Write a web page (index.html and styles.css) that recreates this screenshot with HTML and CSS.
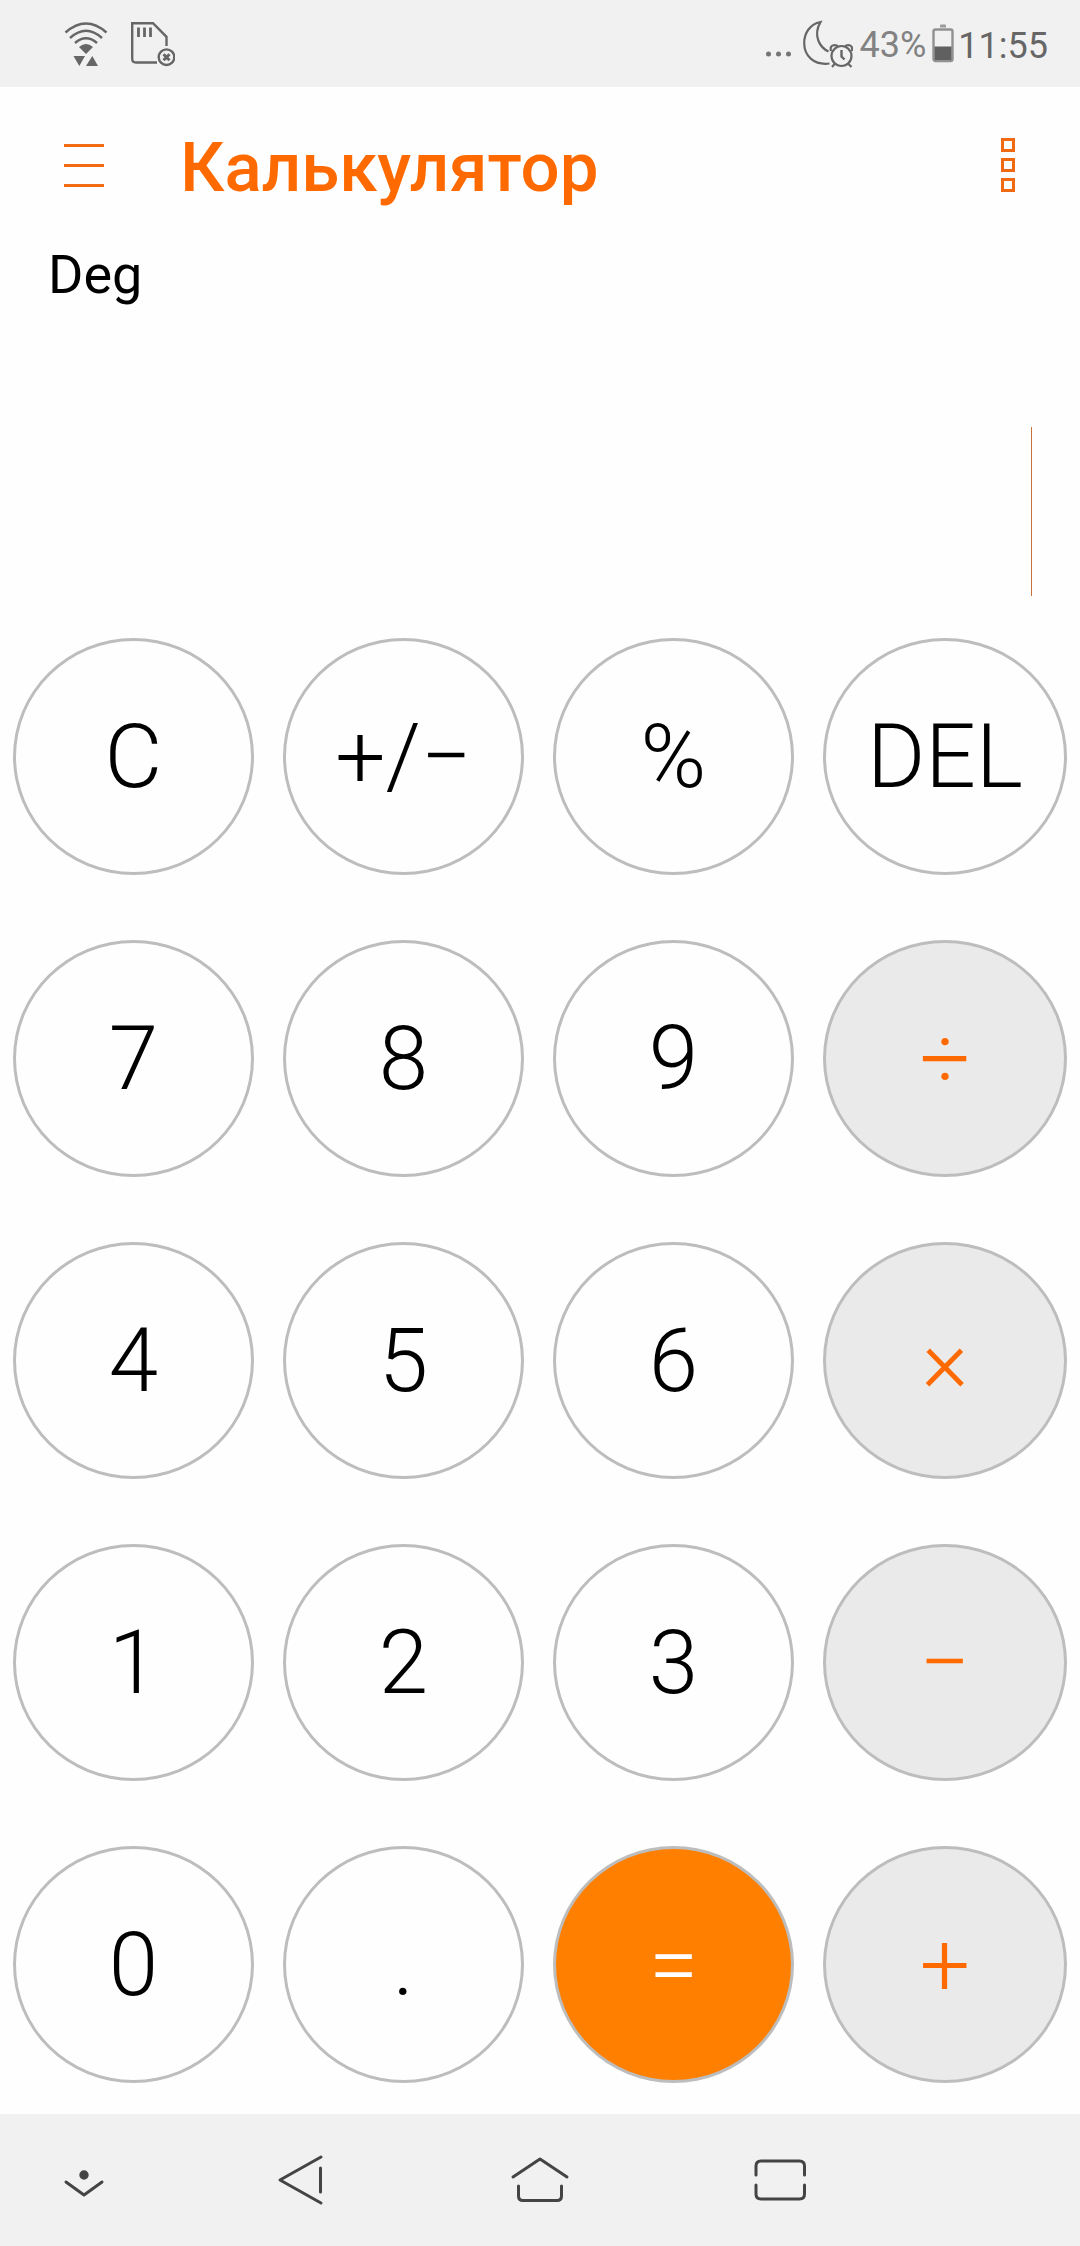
FILE: index.html
```html
<!DOCTYPE html>
<html lang="ru">
<head>
<meta charset="utf-8">
<meta name="viewport" content="width=device-width, initial-scale=1">
<title>Калькулятор</title>
<link rel="stylesheet" href="styles.css">
</head>
<body>
<div class="status">
  <svg class="status-wifi" width="44" height="46" viewBox="0 0 44 46" fill="none" stroke="#666" stroke-width="2.4" aria-hidden="true">
    <path d="M1.500 11.500Q22-6.500 42.500 11.500M6 17Q22 2.500 38 17M11 22Q22 12.500 33 22" />
    <path d="M15 26Q22 20 29 26L22 33ZM9.500 35H21L15.300 45ZM22 45H34L28.300 35Z" fill="#666" stroke="none"/>
  </svg>
  <svg class="status-sd" width="44" height="46" viewBox="0 0 44 46" fill="none" stroke="#666" stroke-width="2.400" aria-hidden="true">
    <path d="M26 41.500H5Q1.200 41.500 1.200 37.500V2.200H22L35.500 15.800V25"/>
    <path d="M7.500 6.500V16M13.500 6.500V16M19.500 6.500V16" stroke-width="2.800"/>
    <circle cx="35.500" cy="36.200" r="7.800"/>
    <path d="M32.500 33.200L38.500 39.200M38.500 33.200L32.500 39.200" stroke-width="3"/>
  </svg>
  <span class="status-space"></span>
  <svg width="25" height="44" viewBox="0 0 25 44" fill="#757575" aria-hidden="true">
    <circle cx="2.500" cy="32" r="2.500"/><circle cx="12.500" cy="32" r="2.500"/><circle cx="22.500" cy="32" r="2.500"/>
  </svg>
  <svg class="status-moon" width="50" height="48" viewBox="0 0 50 48" fill="none" stroke="#666" stroke-width="2.200" aria-hidden="true">
    <path d="M25.500 31.500C17 27.500 9.500 16 17.500 2C7 4 1.200 13 1.200 23C1.200 36 11 45.500 26.500 43.500" />
    <circle cx="38.500" cy="36" r="10"/>
    <path d="M38.500 30V36.500L41.500 39.500" stroke-width="2.400"/>
    <path d="M28 31Q26.500 25.500 31.500 25Q34 25 35 26.500M49 31Q50 25.500 45.500 25Q43 25 42 26.500M31.500 44L29 47M45.500 44L48.500 47"/>
  </svg>
  <span class="status-level">43%</span>
  <svg class="status-battery" width="22" height="40" viewBox="0 0 22 40" aria-hidden="true">
    <path d="M8 3.500V1.500Q8 .5 9 .5H13Q14 .5 14 1.500V3.500Z" fill="#9a9a9a"/>
    <rect x="1.500" y="5.500" width="19" height="31.500" rx="2" fill="none" stroke="#919191" stroke-width="2.400"/>
    <path d="M2.500 22.500H19.500V36H2.500Z" fill="#606060"/>
  </svg>
  <span class="status-time">11:55</span>
</div>
<header class="bar">
  <button class="menu" type="button" aria-label="Меню"><span></span><span></span><span></span></button>
  <h1 class="title">Калькулятор</h1>
  <button class="more" type="button" aria-label="Ещё"><span></span><span></span><span></span></button>
</header>
<main class="calc">
  <div class="mode">Deg</div>
  <div class="display">
    <input class="entry" type="text" aria-label="Выражение" readonly>
    <span class="caret"></span>
  </div>
  <div class="keys">
    <button class="key" type="button">C</button>
    <button class="key" type="button">+/−</button>
    <button class="key" type="button">%</button>
    <button class="key" type="button">DEL</button>
    <button class="key" type="button">7</button>
    <button class="key" type="button">8</button>
    <button class="key" type="button">9</button>
    <button class="key key-op" type="button">÷</button>
    <button class="key" type="button">4</button>
    <button class="key" type="button">5</button>
    <button class="key" type="button">6</button>
    <button class="key key-op" type="button">×</button>
    <button class="key" type="button">1</button>
    <button class="key" type="button">2</button>
    <button class="key" type="button">3</button>
    <button class="key key-op" type="button">−</button>
    <button class="key" type="button">0</button>
    <button class="key" type="button">.</button>
    <button class="key key-equals" type="button">=</button>
    <button class="key key-op" type="button">+</button>
  </div>
</main>
<nav class="nav">
  <button class="nav-button nav-hide" type="button" aria-label="Скрыть панель">
    <svg width="60" height="60" viewBox="0 0 60 60"><circle cx="30" cy="25" r="3.200" fill="#444"/><path d="M12 32L30 45L48 32"/></svg>
  </button>
  <button class="nav-button" type="button" aria-label="Назад">
    <svg width="60" height="60" viewBox="0 0 60 60"><path d="M51 7L10 30L51 53M50.500 18V42"/></svg>
  </button>
  <button class="nav-button" type="button" aria-label="Домой">
    <svg width="60" height="60" viewBox="0 0 60 60"><path d="M3 27L30 9L57 27M8.500 36V46Q8.500 50.500 13 50.500H47Q51.500 50.500 51.500 46V36"/></svg>
  </button>
  <button class="nav-button" type="button" aria-label="Недавние">
    <svg width="60" height="60" viewBox="0 0 60 60"><path d="M6 25V16Q6 11 11 11H49.500Q54.500 11 54.500 16V25M6 35V44Q6 49 11 49H49.500Q54.500 49 54.500 44V35"/></svg>
  </button>
</nav>
</body>
</html>
```

FILE: styles.css
```css
* {
  box-sizing: border-box;
}

body {
  margin: 0;
  min-height: 100vh;
  display: flex;
  flex-direction: column;
  background: #fefefe;
  color: #000;
  font-family: Roboto, "Liberation Sans", sans-serif;
}

button {
  margin: 0;
  padding: 0;
  border: 0;
  background: none;
  color: inherit;
  font: inherit;
}

svg {
  display: block;
  flex: none;
}

.status {
  height: 87px;
  padding: 0 32px 0 64px;
  display: flex;
  align-items: center;
  background: #f1f1f1;
  color: #666;
  font-size: 36px;
  line-height: 44px;
}

.status-sd {
  margin-left: 23px;
}

.status-space {
  flex: 1;
}

.status-moon {
  margin-left: 12px;
}

.status-level {
  margin-left: 7px;
  padding-top: 2px;
  color: #828282;
}

.status-battery {
  margin: 0 4px 0 6px;
}

.status-time {
  padding-top: 4px;
}

.bar {
  height: 156px;
  padding: 0 65px 0 64px;
  display: flex;
  align-items: center;
}

.menu {
  width: 40px;
  display: flex;
  flex-direction: column;
  gap: 17px;
}

.menu span {
  height: 3px;
  background: #f36a14;
}

.title {
  flex: 1;
  margin: 0;
  padding: 6px 0 0 76px;
  color: #ff6a00;
  font-size: 69px;
  font-weight: 500;
  line-height: 80px;
}

.more {
  display: flex;
  flex-direction: column;
  gap: 6px;
}

.more span {
  width: 14px;
  height: 14px;
  border: 3px solid #f06a14;
}

.calc {
  flex: 1;
  display: flex;
  flex-direction: column;
}

.mode {
  padding: 0 48px;
  font-size: 54px;
  line-height: 64px;
}

.display {
  flex: 1;
  min-height: 290px;
  padding: 120px 48px 42px;
  display: flex;
}

.entry {
  flex: 1;
  min-width: 0;
  border: 0;
  padding: 0;
  outline: 0;
  background: none;
  text-align: right;
  font: 300 120px Roboto, sans-serif;
}

.caret {
  width: 1px;
  background: #c9713a;
}

.keys {
  padding: 0 13px 31px;
  display: grid;
  grid-template-columns: repeat(3, 241fr) 244fr;
  grid-auto-rows: 237px;
  gap: 65px 29px;
}

.key {
  border: 3px solid #bdbdbd;
  border-radius: 50%;
  font-size: 89px;
  font-weight: 300;
  line-height: 106px;
}

.key-op {
  background: #eaeaea;
  color: #ff6a00;
}

.key-equals {
  background: #ff8000;
  color: #fff;
}

.nav {
  height: 132px;
  display: grid;
  grid-template-columns: 180fr 240fr 240fr 240fr 180fr;
  background: #f1f1f1;
}

.nav-button {
  display: flex;
  align-items: center;
  justify-content: center;
}

.nav-button svg {
  fill: none;
  stroke: #444;
  stroke-width: 3;
  stroke-linecap: round;
  stroke-linejoin: round;
}

.nav-hide {
  padding-right: 12px;
}
```
